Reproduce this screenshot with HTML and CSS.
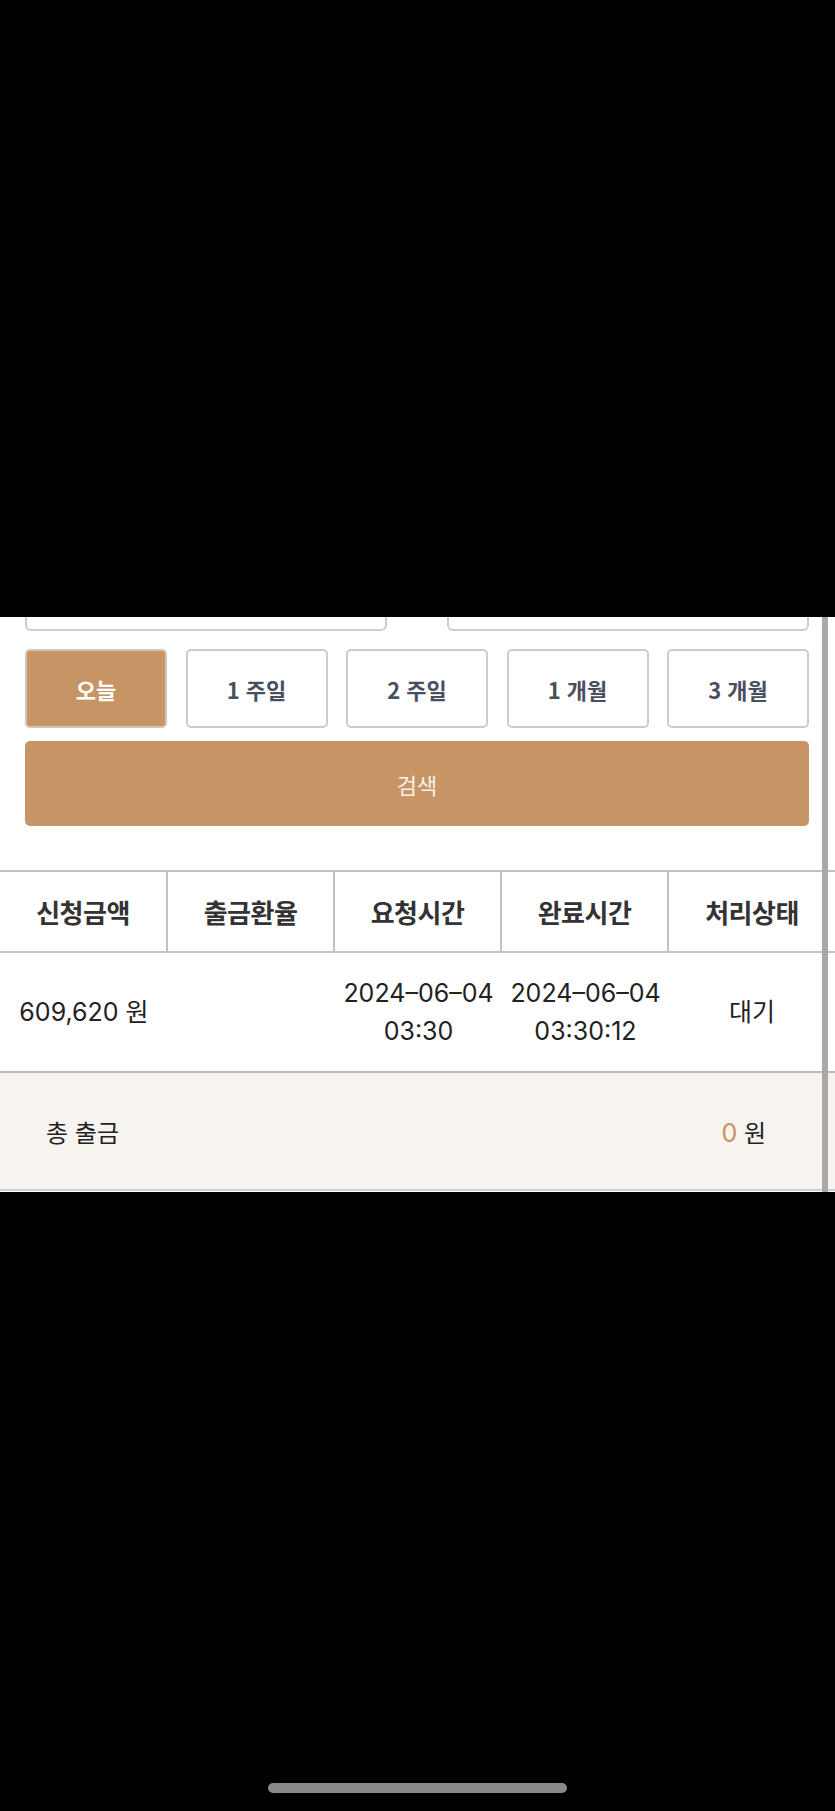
FILE: index.html
```html
<!DOCTYPE html>
<html lang="ko">
<head>
<meta charset="utf-8">
<title>출금 내역</title>
<link rel="stylesheet" href="styles.css">
</head>
<body>
<div class="screen">
  <div class="top-dark"></div>
  <section class="panel">
    <div class="filters">
      <div class="date-row">
        <div class="date-input"></div>
        <div class="date-input"></div>
      </div>
      <div class="period-row">
        <button class="period active">오늘</button>
        <button class="period">1 주일</button>
        <button class="period">2 주일</button>
        <button class="period">1 개월</button>
        <button class="period">3 개월</button>
      </div>
      <button class="search">검색</button>
    </div>
    <div class="grid">
      <div class="head-row">
        <div class="th">신청금액</div>
        <div class="th">출금환율</div>
        <div class="th">요청시간</div>
        <div class="th">완료시간</div>
        <div class="th last">처리상태</div>
      </div>
      <div class="data-row">
        <div class="td">609,620 원</div>
        <div class="td"></div>
        <div class="td">2024–06–04<br>03:30</div>
        <div class="td">2024–06–04<br>03:30:12</div>
        <div class="td">대기</div>
      </div>
    </div>
    <div class="total">
      <span class="total-label">총 출금</span>
      <span class="total-amount"><span class="num">0</span> 원</span>
    </div>
    <div class="scrollbar"></div>
  </section>
  <div class="bottom-dark">
    <div class="home-indicator"></div>
  </div>
</div>
</body>
</html>
```

FILE: styles.css
```css
* { box-sizing: border-box; }

html, body {
  margin: 0;
  padding: 0;
  background: #000;
}

body {
  font-family: "Noto Sans CJK KR", "Noto Sans", sans-serif;
}

.screen {
  width: 835px;
  height: 1811px;
  display: flex;
  flex-direction: column;
  background: #000;
}

.top-dark {
  height: 617px;
  flex: none;
  background: #000;
}

.panel {
  position: relative;
  flex: none;
  background: #fff;
  overflow: hidden;
  padding-bottom: 1px;
}

.filters {
  margin: 0 26px 0 25px;
  display: flex;
  flex-direction: column;
}

.date-row {
  display: flex;
  justify-content: space-between;
  margin-top: -40px;
}

.date-input {
  width: 362px;
  height: 54px;
  border: 2px solid #cdcdcd;
  border-radius: 6px;
  background: #fff;
}

.period-row {
  display: flex;
  gap: 18.5px;
  margin-top: 18px;
}

.period {
  flex: 1 1 0;
  height: 79px;
  margin: 0;
  padding: 0;
  border: 2px solid #cccccc;
  border-radius: 5px;
  background: #fff;
  color: #4a4f5e;
  font-family: "Noto Sans CJK KR", sans-serif;
  font-size: 22px;
  font-weight: 600;
}

.period.active {
  background: #c79565;
  border-color: #d2c6bb;
  color: #fff;
  font-weight: 700;
}

.search {
  margin: 13px 0 0;
  height: 85px;
  width: 100%;
  padding: 0;
  border: none;
  border-radius: 5px;
  background: #c79565;
  color: #f8f1ea;
  font-family: "Noto Sans CJK KR", sans-serif;
  font-size: 22px;
  font-weight: 400;
}

.grid {
  margin-top: 44px;
}

.head-row,
.data-row {
  display: grid;
  grid-template-columns: 168px 167px 167px 167px 166px;
}

.head-row {
  border-top: 2px solid #c9bfbf;
  border-bottom: 2px solid #c9bfbf;
}

.th {
  height: 79px;
  display: flex;
  align-items: center;
  justify-content: center;
  border-right: 2px solid #c9bfbf;
  color: #333;
  font-family: "Noto Sans CJK KR", sans-serif;
  font-size: 26px;
  font-weight: 700;
  letter-spacing: -0.5px;
}

.th.last {
  border-right: none;
}

.td {
  height: 118px;
  display: flex;
  align-items: center;
  justify-content: center;
  text-align: center;
  color: #222;
  font-family: Inter, "Noto Sans CJK KR", sans-serif;
  font-size: 25px;
  line-height: 38px;
}

.total {
  display: flex;
  align-items: center;
  justify-content: space-between;
  height: 120px;
  padding: 0 69px 0 46px;
  background: #f7f3ef;
  border-top: 2px solid #c2baba;
  border-bottom: 2px solid #d4cdcd;
  color: #222;
  font-family: Inter, "Noto Sans CJK KR", sans-serif;
  font-size: 24px;
}

.total-amount .num {
  color: #c8925f;
  font-size: 25px;
}

.scrollbar {
  position: absolute;
  top: 0;
  bottom: 0;
  right: 7px;
  width: 6px;
  background: #a9a9a9;
}

.bottom-dark {
  flex: 1 1 auto;
  display: flex;
  justify-content: center;
  padding-top: 591px;
  background: #000;
}

.home-indicator {
  width: 299px;
  height: 10px;
  border-radius: 5px;
  background: #898989;
}
```
